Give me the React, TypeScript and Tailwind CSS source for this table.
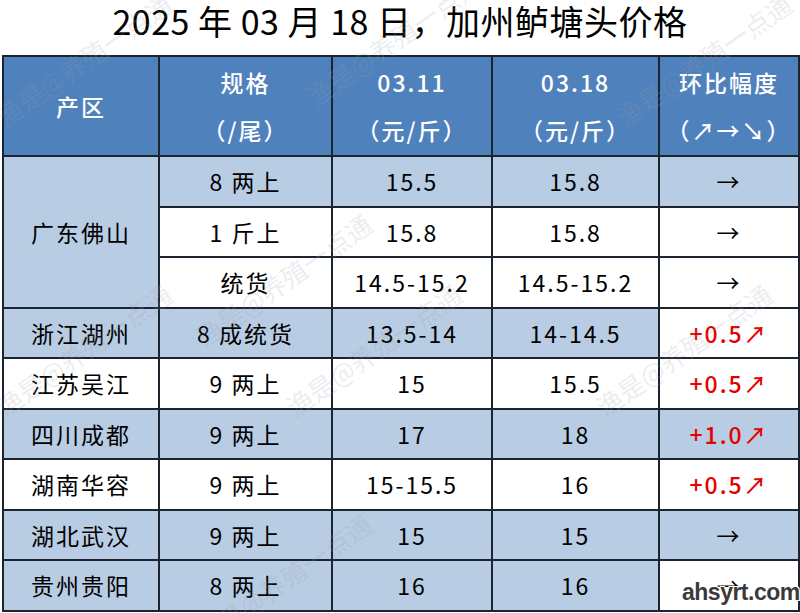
import React from "react"

type Row = {
    region?: string
    span?: number
    spec: string
    prev: string
    cur: string
    change: string
    up?: boolean
    bg: [boolean, boolean, boolean, boolean, boolean]
}

const rows: Row[] = [
    { region: "广东佛山", span: 3, spec: "8 两上", prev: "15.5", cur: "15.8", change: "→", bg: [true, true, true, true, true] },
    { spec: "1 斤上", prev: "15.8", cur: "15.8", change: "→", bg: [true, false, false, false, false] },
    { spec: "统货", prev: "14.5-15.2", cur: "14.5-15.2", change: "→", bg: [true, false, false, false, false] },
    { region: "浙江湖州", spec: "8 成统货", prev: "13.5-14", cur: "14-14.5", change: "+0.5↗", up: true, bg: [true, true, true, true, false] },
    { region: "江苏吴江", spec: "9 两上", prev: "15", cur: "15.5", change: "+0.5↗", up: true, bg: [false, false, false, false, false] },
    { region: "四川成都", spec: "9 两上", prev: "17", cur: "18", change: "+1.0↗", up: true, bg: [true, true, true, true, true] },
    { region: "湖南华容", spec: "9 两上", prev: "15-15.5", cur: "16", change: "+0.5↗", up: true, bg: [false, false, false, false, false] },
    { region: "湖北武汉", spec: "9 两上", prev: "15", cur: "15", change: "→", bg: [true, true, true, true, true] },
    { region: "贵州贵阳", spec: "8 两上", prev: "16", cur: "16", change: "→", bg: [true, true, true, true, false] },
]

// faint diagonal watermarks
const marks = [
    { x: -20, y: 40 },
    { x: 290, y: 20 },
    { x: 600, y: 40 },
    { x: 180, y: 260 },
    { x: -20, y: 330 },
    { x: 580, y: 330 },
    { x: 270, y: 330 },
    { x: 180, y: 560 },
]

const cell = (blue: boolean) =>
    `border-2 border-[#1c2430] text-center ${blue ? "bg-[#b8cce4]" : "bg-white"}`

export default function App() {
    return (
        <div className="relative w-[800px] h-[613px] overflow-hidden bg-white text-black" style={{ fontFamily: '"Noto Sans CJK SC", "Noto Sans", sans-serif' }}>
            <div className="h-[55px] flex items-start justify-center">
                <h1 className="text-[34px] leading-[42px] tracking-[0.5px]">2025 年 03 月 18 日，加州鲈塘头价格</h1>
            </div>
            <table className="ml-[2px] w-[796px] border-collapse table-fixed text-[23px] tracking-[2px]">
                <colgroup>
                    <col className="w-[156px]" />
                    <col className="w-[173px]" />
                    <col className="w-[160px]" />
                    <col className="w-[167px]" />
                    <col className="w-[140px]" />
                </colgroup>
                <thead>
                    <tr className="h-[100px] bg-[#4f81bd] text-white">
                        <th className="border-2 border-[#1c2430] font-medium">产区</th>
                        <th className="border-2 border-[#1c2430] font-medium leading-[48px]">规格<br />（/尾）</th>
                        <th className="border-2 border-[#1c2430] font-medium leading-[48px]">03.11<br />（元/斤）</th>
                        <th className="border-2 border-[#1c2430] font-medium leading-[48px]">03.18<br />（元/斤）</th>
                        <th className="border-2 border-[#1c2430] font-medium leading-[48px]">环比幅度<br />（↗→↘）</th>
                    </tr>
                </thead>
                <tbody>
                    {rows.map((r, i) => (
                        <tr key={i} className="h-[50.5px]">
                            {r.region && (
                                <td rowSpan={r.span ?? 1} className={cell(r.bg[0])}>{r.region}</td>
                            )}
                            <td className={cell(r.bg[1])}>{r.spec}</td>
                            <td className={cell(r.bg[2])}>{r.prev}</td>
                            <td className={cell(r.bg[3])}>{r.cur}</td>
                            <td className={`${cell(r.bg[4])} ${r.up ? "text-[#e60000] font-medium" : ""}`}>{r.change}</td>
                        </tr>
                    ))}
                </tbody>
            </table>

            {marks.map((m, i) => (
                <div
                    key={i}
                    className="absolute pointer-events-none whitespace-nowrap text-[26px] text-[#9aa0a6]/20 -rotate-[35deg]"
                    style={{ left: m.x, top: m.y }}
                >
                    渔是@养殖一点通
                </div>
            ))}

            <div
                className="absolute left-[682px] top-[575px] text-[23px] font-bold text-[#3a3a3a] tracking-[-0.5px]"
                style={{ fontFamily: '"Liberation Sans", Arial, sans-serif', textShadow: "1px 1px 0 #fff, -1px -1px 0 #fff, 1px -1px 0 #fff, -1px 1px 0 #fff" }}
            >
                ahsyrt.com
            </div>
        </div>
    )
}
